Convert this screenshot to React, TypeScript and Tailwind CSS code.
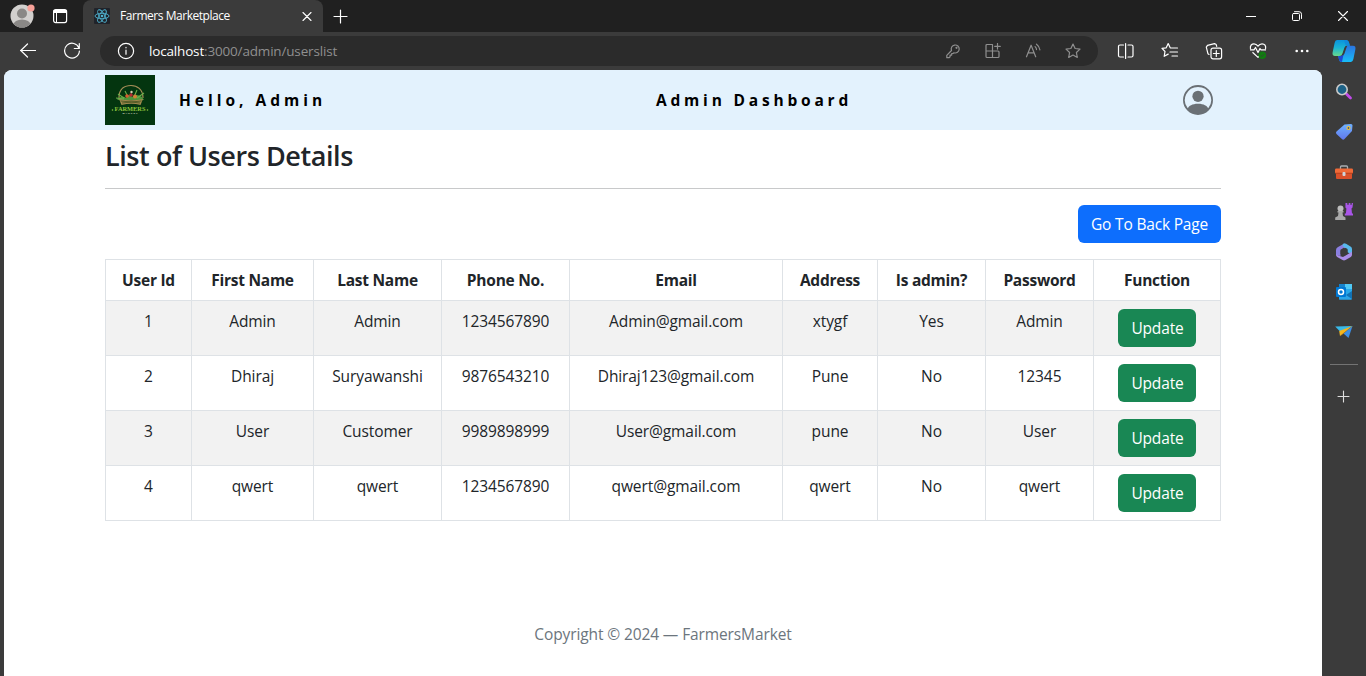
import React from "react";

const ui = "font-['Open_Sans','Noto_Sans',sans-serif]";

const columns = [
  { label: "User Id", width: 86 },
  { label: "First Name", width: 122 },
  { label: "Last Name", width: 128 },
  { label: "Phone No.", width: 128 },
  { label: "Email", width: 213 },
  { label: "Address", width: 95 },
  { label: "Is admin?", width: 108 },
  { label: "Password", width: 108 },
  { label: "Function", width: 127 },
];

const users = [
  ["1", "Admin", "Admin", "1234567890", "Admin@gmail.com", "xtygf", "Yes", "Admin"],
  ["2", "Dhiraj", "Suryawanshi", "9876543210", "Dhiraj123@gmail.com", "Pune", "No", "12345"],
  ["3", "User", "Customer", "9989898999", "User@gmail.com", "pune", "No", "User"],
  ["4", "qwert", "qwert", "1234567890", "qwert@gmail.com", "qwert", "No", "qwert"],
];

function Icon({ size = 20, color = "#fff", width = 1.1, className = "", children }: {
  size?: number; color?: string; width?: number; className?: string; children: React.ReactNode;
}) {
  return (
    <svg width={size} height={size} viewBox={`0 0 ${size} ${size}`} fill="none" stroke={color} strokeWidth={width}
      strokeLinecap="round" strokeLinejoin="round" className={`block shrink-0 ${className}`}>
      {children}
    </svg>
  );
}

function ReactLogo() {
  return (
    <svg width="16" height="16" viewBox="0 0 16 16" fill="none" stroke="#4fb3d0" strokeWidth="0.9" className="shrink-0 rounded-[1px] bg-[#20232a]">
      <ellipse cx="8" cy="8" rx="7" ry="2.7" />
      <ellipse cx="8" cy="8" rx="7" ry="2.7" transform="rotate(60 8 8)" />
      <ellipse cx="8" cy="8" rx="7" ry="2.7" transform="rotate(120 8 8)" />
      <circle cx="8" cy="8" r="1.3" fill="#4fb3d0" stroke="none" />
    </svg>
  );
}

function TitleBar() {
  return (
    <div className="flex h-8 bg-[#202020]">
      <div className="flex w-[83px] items-center pl-[10px]">
        <svg width="26" height="26" viewBox="0 0 26 26" className="shrink-0">
          <clipPath id="avatar"><circle cx="12" cy="13" r="11.5" /></clipPath>
          <circle cx="12" cy="13" r="11.5" fill="#d2d0ce" />
          <g clipPath="url(#avatar)" fill="#8a8886">
            <circle cx="12" cy="10.5" r="5" />
            <ellipse cx="12" cy="22" rx="8.5" ry="5.5" />
          </g>
          <circle cx="21" cy="5" r="3.6" fill="#f8a199" />
        </svg>
        <Icon size={16} width={1.2} className="ml-4">
          <rect x="1.6" y="1.6" width="13" height="13" rx="2" />
          <path d="M2 2.5h12.2M2 3.5h12.5M2 4.5h12.5M4.5 5v9.5" strokeWidth="1" />
        </Icon>
      </div>
      <div className="flex w-[240px] items-center rounded-t-[8px] bg-[#3b3b3b] pl-[11px] pr-[11px]">
        <ReactLogo />
        <span className="ml-[10px] whitespace-nowrap text-[12px] leading-4 tracking-[-0.46px] text-white">Farmers Marketplace</span>
        <Icon size={10} className="ml-auto"><path d="M1 1.500l8 8M9 1.500l-8 8" /></Icon>
      </div>
      <div className="flex items-center pl-[10px]">
        <Icon size={15} width={1.2}><path d="M7.5 1v13M1 7.5h13" /></Icon>
      </div>
      <div className="ml-auto flex items-center gap-9 pr-[18px]">
        <Icon size={10} width={1}><path d="M0 5.5h10" strokeLinecap="butt" /></Icon>
        <Icon size={10} width={1}>
          <rect x="0.5" y="2.5" width="7" height="7" rx="1" />
          <path d="M2.5 .7h4.5a2.5 2.5 0 0 1 2.5 2.5v4.3" />
        </Icon>
        <Icon size={10}><path d="M.5 .5l9 9M9.5 .5l-9 9" /></Icon>
      </div>
    </div>
  );
}

const star = "M8 1l2.1 4.5 4.9.6-3.6 3.4.9 4.9L8 12l-4.3 2.4.9-4.9L1 6.1l4.9-.6z";

function AddressBar() {
  return (
    <div className="flex h-[38px] items-center bg-[#3b3b3b]">
      <Icon size={16} width={1.2} className="ml-[20px]"><path d="M15.5 7.500H.500M7.5 1L.800 7.500 7.500 14" /></Icon>
      <Icon size={18} width={1.2} className="ml-[27px]"><path d="M16 6.2A7.4 7.4 0 1 0 16.4 9M16.3 1.5v5h-5" /></Icon>
      <div className="ml-[19px] flex h-[30px] w-[998px] items-center rounded-full bg-[#2b2b2b] pl-[17px] pr-[17px]">
        <Icon size={18} width={1.2}>
          <circle cx="9" cy="9" r="7.6" />
          <path d="M9 8.2v4M9 5.4v.4" />
        </Icon>
        <span className="ml-[14px] whitespace-nowrap text-[13.5px] leading-5 tracking-[-0.17px] text-[#8f8f8f]">
          <span className="text-white">localhost</span>:3000/admin/userslist
        </span>
        <div className="ml-auto flex items-center gap-6">
          <Icon size={16} color="#8f8f8f" width={1.2}>
            <path d="M6.5 7.5A4 4 0 1 1 9 9.8L8 10.5H6.7v1.6H5.1v1.6L4 14.7H1.8v-2.3z" />
            <circle cx="11.5" cy="4.8" r=".5" />
          </Icon>
          <Icon size={16} color="#8f8f8f" width={1.2}>
            <path d="M7.500 1.500H2q-1 0-1 1v11q0 1 1 1h11q1 0 1-1V9q0-1-1-1H1M7.500 1.500v13M12.500 .5v5.600M9.700 3.300h5.600" />
          </Icon>
          <Icon size={16} color="#8f8f8f" width={1.2}>
            <path d="M1.500 13.8L6.1 2.2l4.6 11.6M3.1 9.8h6M10.1 3.6q1.4 1.2 1.4 3M11.5 1.2q3 2.2 3.4 5.6" />
          </Icon>
          <Icon size={16} color="#8f8f8f" width={1.2}><path d={star} /></Icon>
        </div>
      </div>
      <div className="flex items-center pl-[19px]">
        <Icon size={18} width={1.2}>
          <path d="M6.500 3H3a1.500 1.500 0 0 0-1.500 1.500v9A1.500 1.500 0 0 0 3 15h3.500M11 3h3.500A1.500 1.500 0 0 1 16 4.500v9a1.500 1.500 0 0 1-1.500 1.500H11M8.600 1.500v15" />
        </Icon>
        <Icon size={18} width={1.2} className="ml-[26px]">
          <path d="M10.5 6L9.2 5.8 7.2 1.6 5.2 5.8 1 6.4l3 3.1-.8 4.8 4-2.2M10.5 6H16.500M9 10H16.500M11 14H16.500" />
        </Icon>
        <Icon size={18} width={1.2} className="ml-[26px]">
          <path d="M4 12.4L3 11.8 1.3 5.2l1.2-1.8 7-1.8 1.7 1 .5 1.8" />
          <rect x="6" y="6.2" width="10.6" height="10.6" rx="2" />
          <path d="M11.3 8.6v5.8M8.4 11.5h5.8" />
        </Icon>
        <svg width="18" height="18" viewBox="0 0 18 18" fill="none" stroke="#fff" strokeWidth="1.2" strokeLinejoin="round" className="ml-[26px] shrink-0">
          <path d="M1.5 7C.7 3.3 3 1.8 5 1.8c2 0 3 1 4 2.4 1-1.4 2-2.4 4-2.4 2.600 0 4.300 2 3.500 5.200M1 7.800h4l1.500-2.300 2.500 5 2-4 1 1.300h5M3.500 10.200L9 15.400l2-2" />
          <circle cx="13.3" cy="13.2" r="3.8" fill="#107c10" stroke="none" />
          <path d="M11.600 13.300l1.300 1.200 2.200-2.400" stroke="#3b3b3b" strokeWidth=".8" />
        </svg>
        <svg width="16" height="16" viewBox="0 0 16 16" fill="#fff" className="ml-[27px] shrink-0">
          <circle cx="2.700" cy="8" r="1.300" /><circle cx="8" cy="8" r="1.300" /><circle cx="13.300" cy="8" r="1.300" />
        </svg>
        <svg width="24" height="24" viewBox="0 0 24 24" className="ml-[22px] shrink-0">
          <defs>
            <linearGradient id="cpa" x1="0" y1="0" x2="0" y2="1"><stop offset="0" stopColor="#0a93de" /><stop offset=".5" stopColor="#1bb5d3" /><stop offset="1" stopColor="#67d98c" /></linearGradient>
            <linearGradient id="cpb" x1="0" y1="0" x2="0" y2="1"><stop offset="0" stopColor="#2a74e0" /><stop offset="1" stopColor="#18bdf8" /></linearGradient>
          </defs>
          <path d="M5 1h9q2.500 0 3 2.500l.8 3.200h-2.600q-2.200 0-2.800 2l-2 6q-.8 2.200-3 2.200H3q-3 0-2.400-3.400L2.600 4Q3.200 1 5 1z" fill="url(#cpa)" />
          <path d="M12 1h2q2.500 0 3 2.500l.8 3.200h-4z" fill="#1289dc" />
          <path d="M19 23h-9q-2.500 0-3-2.500L6.300 17h2.500q2.200 0 2.800-2l2-6q.8-2.200 3-2.200H21q3 0 2.400 3.400L21.400 20q-.6 3-2.400 3z" fill="url(#cpb)" />
          <path d="M10.500 15.500l2.600-7q.6-1.600 2-1.800l-2.700 8q-.8 2.200-3 2.200 .700-.400 1.100-1.400z" fill="#3b3b3b" />
          <path d="M6.300 17h2.500q2.200 0 2.800-2L10 23q-2.500 0-3-2.500z" fill="#1c49d4" />
        </svg>
      </div>
    </div>
  );
}

function FarmersLogo() {
  return (
    <svg width="50" height="50" viewBox="0 0 50 50" className="shrink-0 bg-[#04350f]">
      <path d="M14 23C14 13 20 10.500 26 10.500S38 14 38 23" fill="none" stroke="#a88f58" strokeWidth="1.200" />
      <path d="M12 24q6-4 9-1 3-6 6-1 4-4 10 0l2 3H13z" fill="#4f943b" />
      <path d="M13 19l6 4M11 23l8 1M39 18l-7 5M20 16l3 6M32 15l-3 7" stroke="#69b04a" strokeWidth="1.100" />
      <circle cx="22" cy="21" r="1.800" fill="#d65a2d" /><circle cx="26" cy="20" r="1.800" fill="#b52b34" />
      <circle cx="30" cy="21.500" r="2" fill="#d28235" /><circle cx="26.500" cy="17" r="1.200" fill="#d8d2b4" />
      <path d="M14 24q12 2.500 24 0l-2.500 6q-9-2.500-19 0z" fill="#a18a4e" />
      <path d="M15.500 26q11 2 21 0M17 28q10-2 18 0" fill="none" stroke="#334817" strokeWidth=".7" />
      <text x="25" y="36" textAnchor="middle" textLength="31" lengthAdjust="spacingAndGlyphs" fontFamily="Liberation Serif, serif" fontWeight="700" fontSize="7" fill="#8cc43c">FARMERS</text>
      <circle cx="7.500" cy="35" r=".8" fill="#8cc43c" /><circle cx="42.500" cy="35" r=".8" fill="#8cc43c" />
      <text x="25" y="39" textAnchor="middle" textLength="15" fontFamily="Liberation Sans, sans-serif" fontSize="2.500" fill="#c4d0ba">MARKET</text>
    </svg>
  );
}

function Page() {
  return (
    <main className="flex h-[606px] w-[1318px] flex-col overflow-hidden rounded-t-[8px] bg-white text-base leading-6 text-[#212529]">
      <header className="grid h-[60px] shrink-0 grid-cols-[551px_1fr_30px] items-center bg-[#e3f2fd] pl-[101px] pr-[109px] font-bold text-black">
        <div className="flex items-center">
          <FarmersLogo />
          <span className="ml-6 whitespace-nowrap text-[15.500px] tracking-[4px]">Hello, Admin</span>
        </div>
        <span className="whitespace-nowrap text-[15.500px] tracking-[3.800px]">Admin Dashboard</span>
        <svg width="30" height="30" viewBox="0 0 16 16" fill="#6a7075">
          <path d="M11 6a3 3 0 1 1-6 0 3 3 0 0 1 6 0" />
          <path fillRule="evenodd" d="M0 8a8 8 0 1 1 16 0A8 8 0 0 1 0 8m8-7a7 7 0 0 0-5.468 11.370C3.242 11.226 4.805 10 8 10s4.757 1.225 5.468 2.370A7 7 0 0 0 8 1" />
        </svg>
      </header>
      <section className="flex flex-col pl-[101px] pr-[101px]">
        <h1 className="mt-[9px] whitespace-nowrap text-[27px] font-semibold leading-[34px] tracking-[-0.42px]">List of Users Details</h1>
        <div className="mt-[15px] h-px bg-[#c8c9ca]" />
        <button className="mt-4 h-[38px] w-[143px] self-end whitespace-nowrap rounded-[6px] bg-[#0d6efd] text-[15.500px] tracking-[-0.180px] text-white">Go To Back Page</button>
        <table className="mt-4 w-[1116px] table-fixed border-separate border-spacing-0 border-l border-t border-[#dee2e6] text-center text-[15.500px] tracking-[-0.100px]">
          <colgroup>{columns.map((c) => <col key={c.label} style={{ width: c.width }} />)}</colgroup>
          <thead>
            <tr className="h-[41px]">
              {columns.map((c) => <th key={c.label} className="whitespace-nowrap border-b border-r border-[#dee2e6] p-0 font-bold tracking-[-0.250px]">{c.label}</th>)}
            </tr>
          </thead>
          <tbody>
            {users.map((user) => (
              <tr key={user[0]} className="h-[55px] odd:bg-[#f2f2f2]">
                {user.map((value, i) => (
                  <td key={i} className="whitespace-nowrap border-b border-r border-[#dee2e6] px-0 pb-0 pt-2 align-top">{value}</td>
                ))}
                <td className="border-b border-r border-[#dee2e6] px-0 pb-0 pt-2 align-top">
                  <button className="mx-auto block h-[38px] w-[78px] rounded-[6px] bg-[#198754] pl-px text-[15.500px] tracking-[-0.150px] text-white">Update</button>
                </td>
              </tr>
            ))}
          </tbody>
        </table>
      </section>
      <footer className="mt-[101px] text-center text-[15.500px] tracking-[-0.110px] text-[#6c757d]">Copyright © 2024 — FarmersMarket</footer>
    </main>
  );
}

function Sidebar() {
  return (
    <aside className="flex w-[43px] flex-col items-center pt-[12px]">
      <div className="flex flex-col gap-5">
        <svg width="20" height="20" viewBox="0 0 20 20">
          <path d="M12.500 12l4 4" stroke="#c04be8" strokeWidth="2.800" strokeLinecap="round" />
          <circle cx="8" cy="7.500" r="5.200" fill="#1d6287" stroke="#c9c9c9" strokeWidth="1.600" />
        </svg>
        <svg width="20" height="20" viewBox="0 0 20 20">
          <defs><linearGradient id="tag" x1="0" y1="0" x2="0" y2="1"><stop stopColor="#6eb1ff" /><stop offset="1" stopColor="#6178ee" /></linearGradient></defs>
          <path d="M10.500 2.500L17 2q1.500 0 1.500 1.500l-.5 5.500-7.500 8q-1.300 1.300-2.600 0L2.500 12q-1.200-1.200 0-2.400z" fill="url(#tag)" />
          <circle cx="14.500" cy="6" r="1.500" fill="#355495" stroke="#f4c430" strokeWidth="1.200" />
        </svg>
        <svg width="20" height="20" viewBox="0 0 20 20">
          <path d="M6.500 7V5q0-1 1-1h5q1 0 1 1v2" fill="none" stroke="#a9adb1" strokeWidth="1.300" />
          <rect x="1" y="6.500" width="18" height="5" rx="1.200" fill="#ef6a38" />
          <path d="M2 11h16v5q0 1-1 1H3q-1 0-1-1z" fill="#d9502a" />
          <path d="M1 11.200h18" stroke="#a93a18" strokeWidth=".7" /><rect x="8.500" y="10" width="3" height="4" rx="1" fill="#cfd4da" />
        </svg>
        <svg width="20" height="20" viewBox="0 0 20 20">
          <path d="M11.500 1h1.800v1.700h1.400V1h1.700v1.700h1.300V1h1.300L18.500 5.500l-1 1 .5 5h1v2h-8.200v-2h1.100l.5-5-1-1z" fill="#a955e8" />
          <circle cx="6.500" cy="6.500" r="3" fill="#bdbdbd" />
          <path d="M3.500 9h6v1.500H8.500l.5 3.500 2.500 1.500v2.500H1.200v-2.500L4 14l.5-3.500h-1z" fill="#a8a8a8" />
        </svg>
        <svg width="20" height="20" viewBox="0 0 20 20">
          <path d="M10.500 1.500L4 5Q2 6 2 8v5l4.500 1V8.500L12.500 5.500V2.200z" fill="#8a7fe0" />
          <path d="M9 1.800q1.500-.800 3 0L16.500 4.500Q18 5.400 18 7v5.500l-4.500-2.200V7L8.500 4z" fill="#57b9ec" />
          <path d="M18 9.800v3q0 1.500-1.200 2.200L11.500 18q-1.500.800-3 0L3.200 15Q2 14.300 2 12.500l4.500 1.700L9 15z" fill="#a98de8" />
          <path d="M9.800 5.800L13.500 7.800V12L10 14 6.500 12V7.800z" fill="#3b3b3b" />
        </svg>
        <svg width="20" height="20" viewBox="0 0 20 20">
          <path d="M5 2h12q1 0 1 1v13.500q0 1-1 1H5z" fill="#28a8ea" /><path d="M5 2h6v5H5z" fill="#1783cc" /><path d="M11 2h7v5h-7z" fill="#50c9f5" />
          <path d="M18 9v7.500q0 1-1 1H5l7-4z" fill="#2aa4e8" /><path d="M18 9v8l-6-4z" fill="#1272b4" />
          <rect x="2" y="5" width="10" height="10" rx="1" fill="#0078d4" /><circle cx="7" cy="10" r="2.500" fill="none" stroke="#fff" strokeWidth="1.500" />
        </svg>
        <svg width="20" height="20" viewBox="0 0 20 20">
          <path d="M1.200 4.500L18.500 4 6.500 10z" fill="#39b9e8" /><path d="M5.200 9L18.500 4 6 14z" fill="#f5b51b" />
          <path d="M18.500 4l-4 12-5-4.500z" fill="#3b8ee6" /><path d="M18.500 4L9 11.500 6 14.500z" fill="#d68a0c" />
        </svg>
      </div>
      <div className="mt-[22px] h-px w-7 bg-[#737373]" />
      <Icon size={13} color="#ddd" className="mt-[25px]"><path d="M6.500 1v11M1 6.500h11" /></Icon>
    </aside>
  );
}

export default function App() {
  return (
    <div className={`h-[676px] w-[1366px] overflow-hidden bg-[#3b3b3b] ${ui}`}>
      <TitleBar />
      <AddressBar />
      <div className="flex h-[606px] pl-1">
        <Page />
        <Sidebar />
      </div>
    </div>
  );
}
